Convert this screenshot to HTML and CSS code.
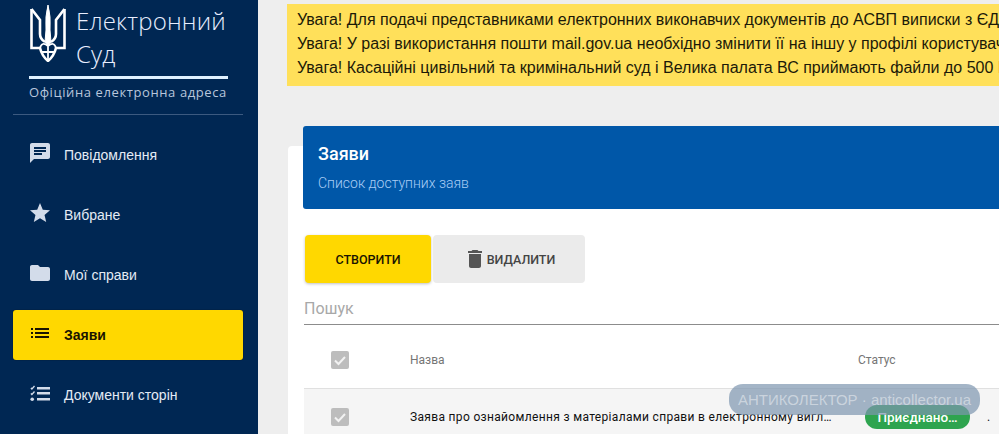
FILE: index.html
```html
<!DOCTYPE html>
<html>

	<head>
		<meta charset="UTF-8">
		<title>Електронний Суд</title>
		<link rel="stylesheet" href="styles.css">
	</head>

	<body>
		<div class="page">
			<div class="sidebar">
				<div class="logo">
					<div class="logo-top">
						<svg class="trident" width="36" height="58" viewBox="0 0 36 58" fill="none" stroke="#fff" stroke-width="2.6">
							<path d="M1.5 5L10 16V30Q10 35 15 38M34.500 5L26 16V30Q26 35 21 38" />
							<path d="M1.500 5V44H10Q12 52 18 57Q24 52 26 44H34.500V5" />
							<path d="M18 1Q21 12 20 26L21 38L18 42L15 38L16 26Q15 12 18 1Z" fill="#fff" stroke-width="1" />
							<path d="M10 44Q12 37 18 42Q24 37 26 44M18 42V57M11 48H25" stroke-width="1.800" />
						</svg>
						<div class="logo-name">Електронний<br>Суд</div>
					</div>
					<div class="logo-sub">Офіційна електронна адреса</div>
				</div>
				<div class="menu">
					<div class="menu-item">
						<svg class="menu-icon" viewBox="0 0 24 24"><path d="M20 2H4c-1.100 0-2 .9-2 2v18l4-4h14c1.100 0 2-.9 2-2V4c0-1.100-.9-2-2-2zM6 9h12v2H6V9zm8 5H6v-2h8v2zm4-6H6V6h12v2z" /></svg>
						<span>Повідомлення</span>
					</div>
					<div class="menu-item">
						<svg class="menu-icon" viewBox="0 0 24 24"><path d="M12 17.270L18.180 21l-1.640-7.030L22 9.240l-7.190-.61L12 2 9.190 8.630 2 9.240l5.460 4.730L5.820 21z" /></svg>
						<span>Вибране</span>
					</div>
					<div class="menu-item">
						<svg class="menu-icon" viewBox="0 0 24 24"><path d="M10 4H4c-1.100 0-2 .9-2 2v12c0 1.100.9 2 2 2h16c1.100 0 2-.9 2-2V8c0-1.100-.9-2-2-2h-8l-2-2z" /></svg>
						<span>Мої справи</span>
					</div>
					<div class="menu-item active">
						<svg class="menu-icon" viewBox="0 0 24 24"><path d="M3 13h2v-2H3v2zm0 4h2v-2H3v2zm0-8h2V7H3v2zm4 4h14v-2H7v2zm0 4h14v-2H7v2zM7 7v2h14V7H7z" /></svg>
						<span>Заяви</span>
					</div>
					<div class="menu-item">
						<svg class="menu-icon" viewBox="0 0 24 24"><path d="M9 6h13v2.500H9V6zm0 5h13v2.500H9V11zm0 6h13v2.500H9V17zM2.500 7.500l1.400 1.400L7 5.500 6 4.600 3.900 6.900 3.300 6.300zm0 5.500l1.400 1.400L7 11 6 10.100l-2.100 2.300-.6-.6z" /><circle cx="4.200" cy="18.300" r="1.800" /></svg>
						<span>Документи сторін</span>
					</div>
				</div>
			</div>

			<div class="content">
				<div class="notice">
					<p>Увага! Для подачі представниками електронних виконавчих документів до АСВП виписки з ЄДРСР необхідно</p>
					<p>Увага! У разі використання пошти mail.gov.ua необхідно змінити її на іншу у профілі користувача</p>
					<p>Увага! Касаційні цивільний та кримінальний суд і Велика палата ВС приймають файли до 500 МБ</p>
				</div>

				<div class="card">
					<div class="card-head">
						<h2>Заяви</h2>
						<p>Список доступних заяв</p>
					</div>
					<div class="actions">
						<div class="btn btn-create">Створити</div>
						<div class="btn btn-delete">
							<svg class="trash" viewBox="0 0 24 24"><path d="M6 19c0 1.100.9 2 2 2h8c1.100 0 2-.9 2-2V7H6v12zM19 4h-3.500l-1-1h-5l-1 1H5v2h14V4z" /></svg>
							Видалити
						</div>
					</div>
					<div class="search">Пошук</div>
					<div class="row row-head">
						<div class="check"><svg viewBox="0 0 18 18"><path d="M4 9.500l3.500 3.500L14 6" /></svg></div>
						<div class="col-name">Назва</div>
						<div class="col-status">Статус</div>
					</div>
					<div class="row row-data">
						<div class="check"><svg viewBox="0 0 18 18"><path d="M4 9.500l3.500 3.500L14 6" /></svg></div>
						<div class="col-name cut">Заява про ознайомлення з матеріалами справи в електронному вигляді</div>
						<div class="col-status"><span class="chip">Приєднано…</span></div>
						<div class="col-more">.</div>
					</div>
				</div>
			</div>
		</div>
		<div class="watermark">АНТИКОЛЕКТОР · anticollector.ua</div>
	</body>

</html>
```

FILE: styles.css
```css
* {
	margin: 0;
	box-sizing: border-box;
}

html,
body {
	height: 100%;
	overflow: hidden;
}

body {
	font-family: "Liberation Sans", Arial, sans-serif;
	background: #eee;
}

.page {
	display: flex;
	height: 434px;
	overflow: hidden;
}

.sidebar {
	width: 258px;
	flex: none;
	background: #002753;
	color: #e4ebf5;
	padding: 0 15px 0 13px;
}

.logo {
	height: 115px;
	padding: 4px 15px 0 16px;
	border-bottom: 1px solid #3c5a80;
}

.logo-top {
	display: flex;
	gap: 10px;
	height: 72px;
	padding-left: 1px;
}

.trident {
	flex: none;
}

.logo-name {
	font-family: "Open Sans", sans-serif;
	font-weight: 300;
	font-size: 24px;
	line-height: 33px;
	letter-spacing: .2px;
	color: #e8eeff;
	white-space: nowrap;
}

.logo-sub {
	border-top: 3px solid #dff1ff;
	padding-top: 3px;
	font-family: "Open Sans", sans-serif;
	font-size: 13px;
	line-height: 21px;
	letter-spacing: .6px;
	color: #b8c6dc;
	white-space: nowrap;
}

.menu {
	padding-top: 15px;
}

.menu-item {
	display: flex;
	align-items: center;
	gap: 14px;
	height: 50px;
	margin-bottom: 10px;
	padding-left: 17px;
	font-size: 14px;
	border-radius: 3px;
}

.menu-icon {
	width: 20px;
	height: 24px;
	flex: none;
	margin-bottom: 5px;
	fill: #d3dcea;
	transform: scale(1.200);
}

.menu-item.active {
	background: #ffd800;
	color: #1a1400;
	font-weight: bold;
	box-shadow: 0 0 1px #000;
}

.menu-item.active .menu-icon {
	fill: #1a1400;
}

.content {
	flex: 1;
	min-width: 0;
	overflow: hidden;
}

.notice {
	margin: 4px 0 0 29px;
	height: 82px;
	padding: 4px 0 0 10px;
	background: #ffe05a;
	color: #1c1a08;
	font-size: 16px;
	line-height: 24px;
	white-space: nowrap;
	overflow: hidden;
}

.card {
	margin: 60px 0 0 30px;
	height: 300px;
	background: #fff;
	border-radius: 4px 0 0 0;
}

.card-head {
	position: relative;
	top: -20px;
	margin-left: 15px;
	height: 83px;
	margin-bottom: -20px;
	padding: 17px 15px 0;
	background: #0057a8;
	border-radius: 3px 0 0 3px;
	font-family: Roboto, sans-serif;
	color: #fff;
}

.card-head h2 {
	font-size: 18px;
	font-weight: 500;
	line-height: 21px;
}

.card-head p {
	margin-top: 11px;
	font-size: 14px;
	font-weight: 300;
	line-height: 16px;
	color: #a9cdf5;
}

.actions {
	display: flex;
	gap: 2px;
	margin: 26px 0 0 17px;
}

.btn {
	display: flex;
	align-items: center;
	justify-content: center;
	height: 48px;
	border-radius: 4px;
	font-family: Roboto, sans-serif;
	font-size: 12.500px;
	font-weight: 500;
	text-transform: uppercase;
}

.btn-create {
	width: 126px;
	background: #ffd800;
	color: #1a1400;
	box-shadow: 0 1px 3px rgba(0, 0, 0, .25);
}

.btn-delete {
	width: 152px;
	gap: 0;
	background: #ebebeb;
	color: #444;
}

.trash {
	width: 24px;
	height: 24px;
	fill: #555;
}

.search {
	margin: 14px 0 0 16px;
	height: 28px;
	border-bottom: 1px solid #8c8c8c;
	font-family: Roboto, sans-serif;
	font-size: 16px;
	line-height: 24px;
	color: #a8a8a8;
}

.row {
	display: flex;
	align-items: center;
	margin-left: 16px;
	font-family: Roboto, sans-serif;
	font-size: 12px;
}

.row-head {
	height: 64px;
	padding-top: 7px;
	border-bottom: 1px solid #e0e0e0;
	color: #757575;
}

.row-data {
	height: 56px;
	background: #f5f5f5;
	color: #111;
}

.check {
	width: 18px;
	height: 18px;
	flex: none;
	margin: 0 61px 0 27px;
	background: #bdbdbd;
	border-radius: 2px;
}

.check svg {
	display: block;
	fill: none;
	stroke: #f2f2f2;
	stroke-width: 2;
}

.col-name {
	width: 448px;
	flex: none;
}

.col-name.cut {
	padding-right: 25px;
	letter-spacing: .33px;
	white-space: nowrap;
	overflow: hidden;
	text-overflow: ellipsis;
}

.col-status {
	width: 129px;
	flex: none;
}

.row-data .col-status {
	padding-left: 7px;
}

.chip {
	display: block;
	width: 105px;
	height: 24px;
	border-radius: 12px;
	background: #2ea44f;
	color: #fff;
	font-size: 13.500px;
	font-weight: 500;
	line-height: 24px;
	text-align: center;
}

.watermark {
	position: absolute;
	left: 729px;
	top: 384px;
	width: 251px;
	height: 31px;
	border-radius: 14px;
	background: rgba(125, 150, 175, .7);
	color: rgba(255, 255, 255, .45);
	font-size: 15px;
	line-height: 31px;
	text-align: center;
	white-space: nowrap;
}
```
